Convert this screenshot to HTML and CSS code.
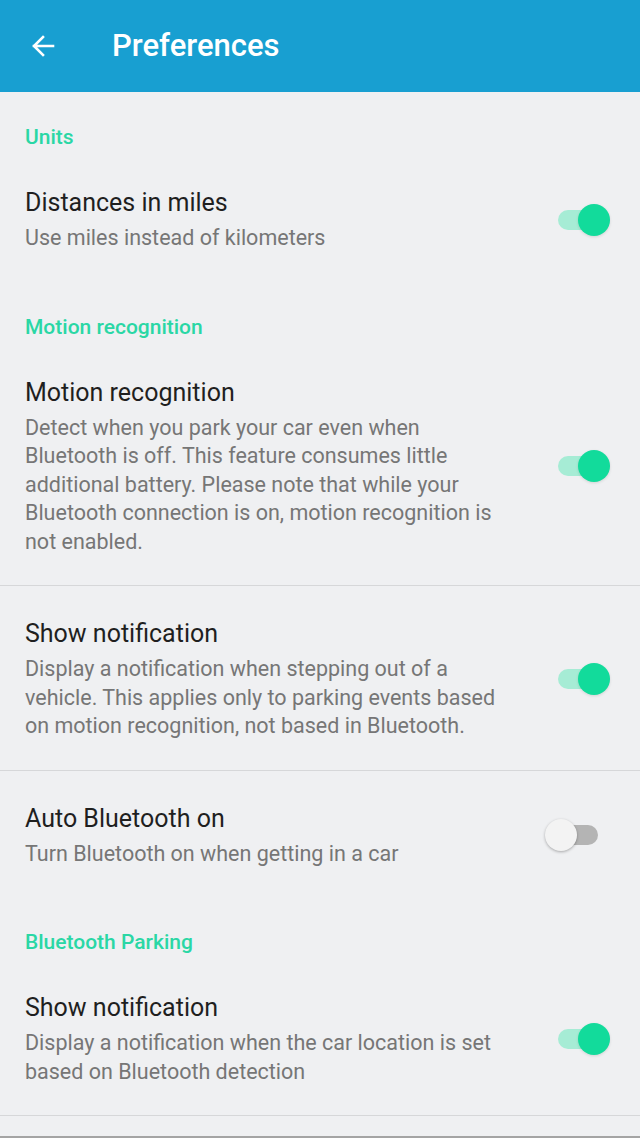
FILE: index.html
```html
<!DOCTYPE html>
<html>
<head>
<meta charset="utf-8">
<link rel="stylesheet" href="styles.css">
</head>
<body>
<header class="appbar">
  <svg class="back" width="26" height="26" viewBox="0 0 26 26"><path d="M23 13H4M13 4L4 13L13 22" fill="none" stroke="#fff" stroke-width="2.6" stroke-linecap="square"/></svg>
  <h1 class="title">Preferences</h1>
</header>
<main class="list">
  <div class="cat">Units</div>
  <div class="item">
    <div class="text">
      <div class="name">Distances in miles</div>
      <div class="sum">Use miles instead of kilometers</div>
    </div>
    <div class="switch on"><span class="track"></span><span class="thumb"></span></div>
  </div>

  <div class="cat">Motion recognition</div>
  <div class="item div">
    <div class="text">
      <div class="name">Motion recognition</div>
      <div class="sum">Detect when you park your car even when Bluetooth is off. This feature consumes little additional battery. Please note that while your Bluetooth connection is on, motion recognition is not enabled.</div>
    </div>
    <div class="switch on"><span class="track"></span><span class="thumb"></span></div>
  </div>
  <div class="item div">
    <div class="text">
      <div class="name">Show notification</div>
      <div class="sum">Display a notification when stepping out of a vehicle. This applies only to parking events based on motion recognition, not based in Bluetooth.</div>
    </div>
    <div class="switch on"><span class="track"></span><span class="thumb"></span></div>
  </div>
  <div class="item">
    <div class="text">
      <div class="name">Auto Bluetooth on</div>
      <div class="sum">Turn Bluetooth on when getting in a car</div>
    </div>
    <div class="switch off"><span class="track"></span><span class="thumb"></span></div>
  </div>

  <div class="cat">Bluetooth Parking</div>
  <div class="item div">
    <div class="text">
      <div class="name">Show notification</div>
      <div class="sum">Display a notification when the car location is set based on Bluetooth detection</div>
    </div>
    <div class="switch on"><span class="track"></span><span class="thumb"></span></div>
  </div>
</main>
<div class="navedge"></div>
</body>
</html>
```
FILE: styles.css
```css
* { box-sizing: border-box; }
html, body { margin: 0; padding: 0; }
body {
  width: 640px;
  height: 1138px;
  background: #eff0f2;
  font-family: Roboto, "Noto Sans", sans-serif;
  display: flex;
  flex-direction: column;
  overflow: hidden;
}
.appbar {
  height: 92px;
  background: #189fd1;
  display: flex;
  align-items: center;
  padding-left: 30px;
  flex: none;
}
.back { display: block; margin-top: -1px; }
.title {
  margin: 0 0 0 56px;
  font-size: 31px;
  font-weight: 500;
  color: #fff;
  line-height: 36px;
}
.list { flex: 1; }
.cat {
  padding: 31px 25px 4px;
  font-size: 21px;
  line-height: 28px;
  font-weight: 500;
  color: #2ad7a5;
}
.item {
  display: flex;
  align-items: center;
  padding: 32px 30px 29px 25px;
}
.item.div { border-bottom: 1px solid #d6d7d9; }
.text { width: 480px; margin-right: 36px; }
.name {
  font-size: 25px;
  line-height: 32px;
  color: #1f1f1f;
  margin-bottom: 5px;
}
.sum {
  font-size: 21.5px;
  line-height: 28.5px;
  color: #767676;
}
.switch {
  position: relative;
  width: 54px;
  height: 32px;
  flex: none;
  margin-left: auto;
}
.track {
  position: absolute;
  left: 2px;
  right: 12px;
  top: 6px;
  height: 20px;
  border-radius: 10px;
}
.thumb {
  position: absolute;
  top: 0;
  width: 32px;
  height: 32px;
  border-radius: 50%;
}
.on .track { background: #a6ecd5; }
.on .thumb { right: 0; background: #12db9b; box-shadow: 0 1px 3px rgba(0,0,0,0.12); }
.off .track { background: #b4b4b4; }
.off .thumb { left: -11px; background: #f3f3f3; box-shadow: 0 1px 3px rgba(0,0,0,0.3); }
.navedge { height: 2px; background: #a4a4a4; flex: none; }
```
